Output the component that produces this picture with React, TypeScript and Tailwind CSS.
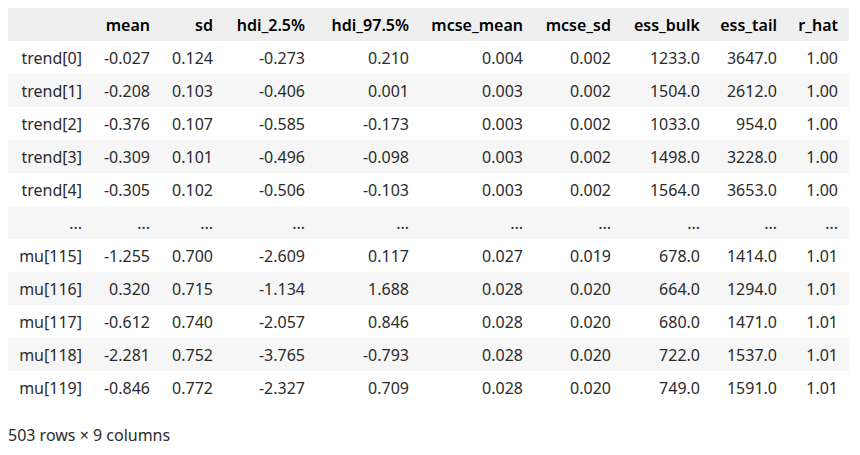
const columns = [
  { key: "mean", width: "w-[68px]" },
  { key: "sd", width: "w-[63px]" },
  { key: "hdi_2.5%", width: "w-[92px]" },
  { key: "hdi_97.5%", width: "w-[104px]" },
  { key: "mcse_mean", width: "w-[114px]" },
  { key: "mcse_sd", width: "w-[88px]" },
  { key: "ess_bulk", width: "w-[89px]" },
  { key: "ess_tail", width: "w-[77px]" },
  { key: "r_hat", width: "w-[61px]" },
];

const rows: [string, string[]][] = [
  ["trend[0]", ["-0.027", "0.124", "-0.273", "0.210", "0.004", "0.002", "1233.0", "3647.0", "1.00"]],
  ["trend[1]", ["-0.208", "0.103", "-0.406", "0.001", "0.003", "0.002", "1504.0", "2612.0", "1.00"]],
  ["trend[2]", ["-0.376", "0.107", "-0.585", "-0.173", "0.003", "0.002", "1033.0", "954.0", "1.00"]],
  ["trend[3]", ["-0.309", "0.101", "-0.496", "-0.098", "0.003", "0.002", "1498.0", "3228.0", "1.00"]],
  ["trend[4]", ["-0.305", "0.102", "-0.506", "-0.103", "0.003", "0.002", "1564.0", "3653.0", "1.00"]],
  ["...", ["...", "...", "...", "...", "...", "...", "...", "...", "..."]],
  ["mu[115]", ["-1.255", "0.700", "-2.609", "0.117", "0.027", "0.019", "678.0", "1414.0", "1.01"]],
  ["mu[116]", ["0.320", "0.715", "-1.134", "1.688", "0.028", "0.020", "664.0", "1294.0", "1.01"]],
  ["mu[117]", ["-0.612", "0.740", "-2.057", "0.846", "0.028", "0.020", "680.0", "1471.0", "1.01"]],
  ["mu[118]", ["-2.281", "0.752", "-3.765", "-0.793", "0.028", "0.020", "722.0", "1537.0", "1.01"]],
  ["mu[119]", ["-0.846", "0.772", "-2.327", "0.709", "0.028", "0.020", "749.0", "1591.0", "1.01"]],
];

export default function App() {
  return (
    <div className="min-h-[455px] bg-white px-2 pt-2 font-['Noto_Sans','Open_Sans',sans-serif] text-[16px] text-[#2b2b2b]">
      <table className="w-[841px] table-fixed border-collapse">
        <colgroup>
          <col className="w-[85px]" />
          {columns.map((c) => (
            <col key={c.key} className={c.width} />
          ))}
        </colgroup>
        <thead>
          <tr className="h-[33px] bg-[#efefef]">
            <th />
            {columns.map((c) => (
              <th key={c.key} className="whitespace-nowrap pr-[11px] text-right font-semibold text-black">
                {c.key}
              </th>
            ))}
          </tr>
        </thead>
        <tbody>
          {rows.map(([label, values], i) => (
            <tr key={label + i} className={`h-[33px] ${i % 2 === 1 ? "bg-[#f6f6f6]" : "bg-white"}`}>
              <th className="whitespace-nowrap pr-[11px] text-right font-normal">{label}</th>
              {values.map((v, j) => (
                <td key={j} className="whitespace-nowrap pr-[11px] text-right">
                  {v}
                </td>
              ))}
            </tr>
          ))}
        </tbody>
      </table>
      <p className="mt-[19px] leading-[24px]">503 rows × 9 columns</p>
    </div>
  );
}
